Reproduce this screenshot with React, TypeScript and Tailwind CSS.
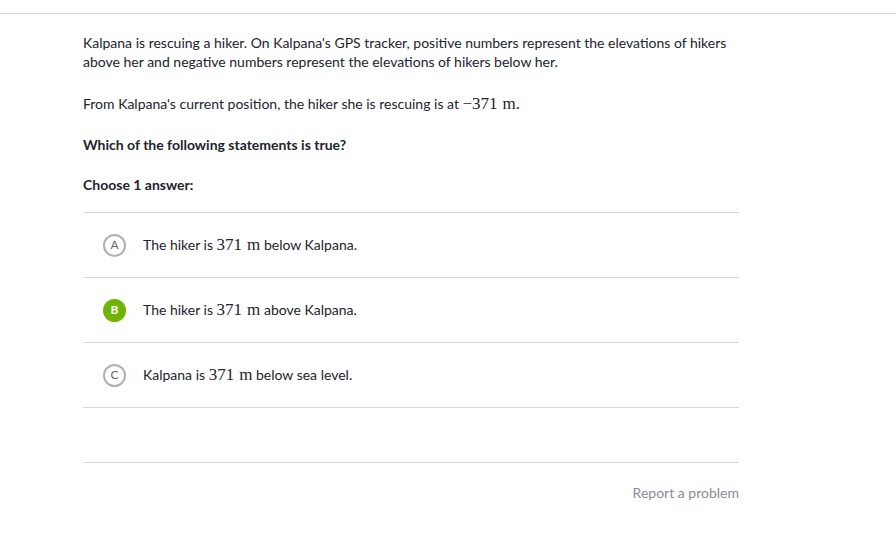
const MATH = "font-['Liberation_Serif','DejaVu_Serif',serif] text-[17px]";

type Choice = { letter: string; pre: string; post: string; selected?: boolean };

const CHOICES: Choice[] = [
  { letter: "A", pre: "The hiker is ", post: " below Kalpana." },
  { letter: "B", pre: "The hiker is ", post: " above Kalpana.", selected: true },
  { letter: "C", pre: "Kalpana is ", post: " below sea level." },
];

function Math371() {
  return (
    <span className={MATH}>
      371<span className="ml-[5px]">m</span>
    </span>
  );
}

function ChoiceRow({ choice }: { choice: Choice }) {
  return (
    <div className="flex items-center h-[65px] border-b border-[#d6d6d6] pl-[20px]">
      {choice.selected ? (
        <span className="flex items-center justify-center w-[23px] h-[23px] rounded-full bg-[#71b307] text-white text-[12px] font-bold">
          {choice.letter}
        </span>
      ) : (
        <span className="flex items-center justify-center w-[23px] h-[23px] rounded-full border-2 border-[#b0b0b0] text-[#666] text-[12px]">
          {choice.letter}
        </span>
      )}
      <span className="ml-[17px] text-[14px] text-[#21242c]">
        {choice.pre}
        <Math371 />
        {choice.post}
      </span>
    </div>
  );
}

export default function App() {
  return (
    <div className="w-[896px] h-[537px] bg-white font-['Lato','Open_Sans',sans-serif] text-[#21242c] overflow-hidden">
      <div className="h-[14px] border-b border-[#d6d6d6]" />
      <div className="ml-[83px] w-[656px] pt-[19px]">
        <p className="text-[14px] leading-[19px]">
          Kalpana is rescuing a hiker. On Kalpana's GPS tracker, positive numbers represent the elevations of hikers
          above her and negative numbers represent the elevations of hikers below her.
        </p>
        <p className="text-[14px] leading-[19px] mt-[23px]">
          From Kalpana's current position, the hiker she is rescuing is at{" "}
          <span className={MATH}>
            −371<span className="ml-[5px]">m</span>.
          </span>
        </p>
        <p className="text-[14px] leading-[19px] mt-[22px] font-bold">Which of the following statements is true?</p>
        <p className="text-[14px] leading-[19px] mt-[21px] font-bold">Choose 1 answer:</p>
        <div className="mt-[18px] border-t border-[#d6d6d6]">
          {CHOICES.map((c) => (
            <ChoiceRow key={c.letter} choice={c} />
          ))}
        </div>
        <div className="mt-[54px] border-t border-[#d6d6d6]" />
        <div className="flex justify-end mt-[19px]">
          <span className="text-[14px] text-[#888d93]">Report a problem</span>
        </div>
      </div>
    </div>
  );
}
